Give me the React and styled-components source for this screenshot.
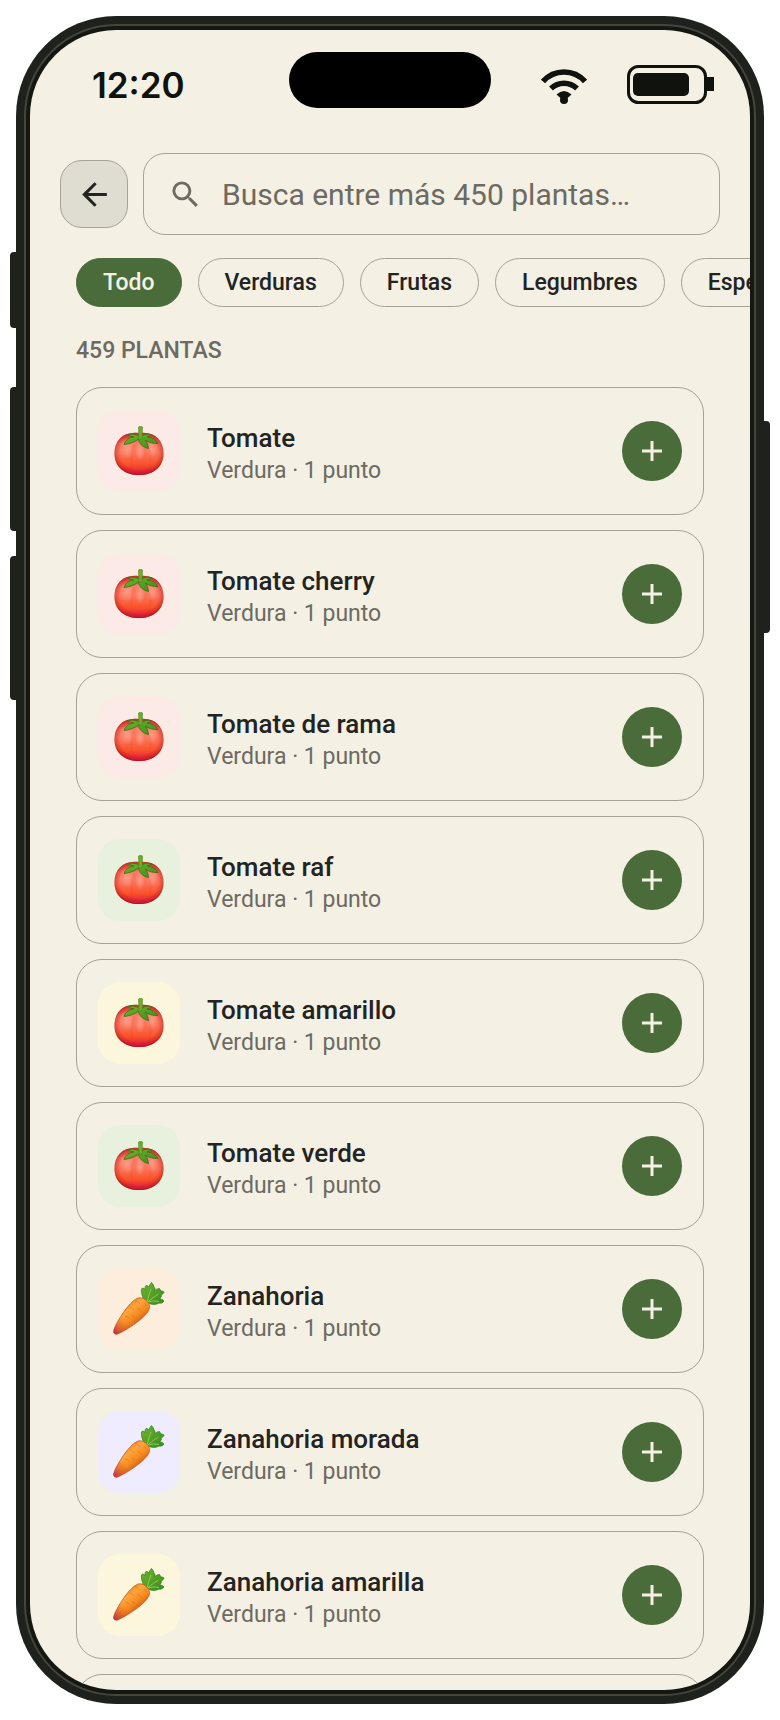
import React, { useState } from 'react';
import styled, { createGlobalStyle } from 'styled-components';

const colors = {
  paper: '#f4f0e4',
  ink: '#23231f',
  muted: '#6c6a61',
  line: '#a5a296',
  green: '#4a6c3a',
  frame: '#1f211c',
  frameLine: '#44463e',
  status: '#10120d',
};

const tints = {
  pink: '#fceae7',
  green: '#e8f1de',
  yellow: '#fcf6dc',
  orange: '#fdeddc',
  purple: '#eeecfe',
};

const GlobalStyle = createGlobalStyle`
  * {
    box-sizing: border-box;
  }

  body {
    margin: 0;
    background: #fff;
    color: ${colors.ink};
    font-family: Roboto, 'Liberation Sans', sans-serif;
  }

  button,
  input {
    font-family: inherit;
  }
`;

const Page = styled.div`
  height: 100vh;
  padding: 16px;
`;

const Phone = styled.div`
  position: relative;
  height: 100%;
  padding: 8px;
  border-radius: 100px;
  background: ${colors.frame};
`;

const SideButton = styled.span`
  position: absolute;
  ${props => props.$side}: -6px;
  top: ${props => props.$top}px;
  width: 6px;
  height: ${props => props.$length}px;
  border-radius: ${props =>
    props.$side === 'left' ? '4px 0 0 4px' : '0 4px 4px 0'};
  background: ${colors.frame};
`;

const Bezel = styled.div`
  height: 100%;
  padding: 4px;
  border: 2px solid ${colors.frameLine};
  border-radius: 92px;
  background: #141712;
`;

const Screen = styled.div`
  height: 100%;
  overflow: hidden;
  border-radius: 86px;
  background: ${colors.paper};
`;

const StatusBar = styled.header`
  display: grid;
  grid-template-columns: 1fr auto 1fr;
  align-items: start;
  padding: 22px 36px 0 62px;
`;

const Clock = styled.time`
  padding-top: 5px;
  font-family: Inter, sans-serif;
  font-size: 35px;
  font-weight: 600;
  line-height: 56px;
  color: ${colors.status};
`;

const Island = styled.div`
  width: 202px;
  height: 56px;
  margin-right: 26px;
  border-radius: 28px;
  background: #000;
`;

const StatusIcons = styled.div`
  display: flex;
  justify-content: flex-end;
  gap: 39px;
  padding-top: 12px;
`;

const SearchRow = styled.div`
  display: flex;
  align-items: center;
  gap: 15px;
  padding: 40px 30px 0;
`;

const BackButton = styled.button`
  display: flex;
  flex: none;
  align-items: center;
  justify-content: center;
  width: 68px;
  height: 68px;
  padding: 0;
  border: 1px solid ${colors.line};
  border-radius: 22px;
  background: #dfdcd1;
  color: ${colors.ink};
`;

const SearchBox = styled.label`
  display: flex;
  flex: 1;
  align-items: center;
  gap: 19px;
  height: 82px;
  padding: 0 24px;
  border: 1px solid ${colors.line};
  border-radius: 22px;
  color: ${colors.muted};
`;

const SearchInput = styled.input`
  flex: 1;
  min-width: 0;
  padding: 0;
  border: 0;
  outline: 0;
  background: transparent;
  color: ${colors.ink};
  font-size: 30px;

  &::placeholder {
    color: ${colors.muted};
    opacity: 1;
  }
`;

const Chips = styled.nav`
  display: flex;
  gap: 16px;
  overflow: hidden;
  padding: 23px 0 0 46px;
`;

const Chip = styled.button`
  flex: none;
  height: 49px;
  padding: 0 26px;
  border: 1px solid ${props => (props.$active ? colors.green : colors.line)};
  border-radius: 25px;
  background: ${props => (props.$active ? colors.green : 'transparent')};
  color: ${props => (props.$active ? colors.paper : colors.ink)};
  font-size: 23px;
  font-weight: 500;
`;

const Count = styled.h2`
  margin: 28px 46px 0;
  color: ${colors.muted};
  font-size: 23px;
  font-weight: 500;
  line-height: 32px;
  text-transform: uppercase;
`;

const List = styled.ul`
  display: flex;
  flex-direction: column;
  gap: 15px;
  margin: 0;
  padding: 20px 46px 0;
  list-style: none;
`;

const Card = styled.li`
  display: flex;
  align-items: center;
  height: 128px;
  padding: 0 21px;
  border: 1px solid ${colors.line};
  border-radius: 26px;
`;

const Thumb = styled.div`
  display: flex;
  flex: none;
  align-items: center;
  justify-content: center;
  width: 82px;
  height: 82px;
  border-radius: 22px;
  background: ${props => tints[props.$tint]};
`;

const Info = styled.div`
  flex: 1;
  min-width: 0;
  padding: 4px 27px 0;
`;

const Name = styled.h3`
  margin: 0;
  font-size: 26px;
  font-weight: 500;
  line-height: 34px;
`;

const Detail = styled.p`
  margin: 0;
  color: ${colors.muted};
  font-size: 23px;
  line-height: 31px;
`;

const AddButton = styled.button`
  display: flex;
  flex: none;
  align-items: center;
  justify-content: center;
  width: 60px;
  height: 60px;
  padding: 0;
  border: 0;
  border-radius: 50%;
  background: ${colors.green};
  color: ${colors.paper};
`;

const WifiIcon = () => (
  <svg width="46" height="40" viewBox="0 -4 46 40" fill="none" aria-hidden="true">
    <g stroke={colors.status} strokeWidth="5.500">
      <path d="M2 13.500a28 28 0 0 1 42 0" />
      <path d="M10 20.500a18.500 18.500 0 0 1 26 0" />
    </g>
    <path d="M15.500 26.500Q23 19.500 30.500 26.500L26 30.500h-6z" fill={colors.status} />
    <circle cx="23" cy="32" r="4" fill={colors.status} />
  </svg>
);

const BatteryIcon = () => (
  <svg width="88" height="40" viewBox="0 0 88 40" fill="none" aria-hidden="true">
    <rect x="2.500" y="2.500" width="77" height="36" rx="10" stroke={colors.status} strokeWidth="3" />
    <rect x="7" y="9" width="56" height="23" rx="5" fill={colors.status} />
    <path d="M81 13h7v14h-7z" fill={colors.status} />
  </svg>
);

const BackIcon = () => (
  <svg width="37" height="37" viewBox="0 0 24 24" aria-hidden="true">
    <path
      d="M20 11H7.830l5.590-5.590L12 4l-8 8 8 8 1.410-1.410L7.830 13H20z"
      fill="currentColor"
    />
  </svg>
);

const SearchIcon = () => (
  <svg width="35" height="35" viewBox="0 0 24 24" aria-hidden="true">
    <path
      d="M15.500 14h-.790l-.280-.270A6.470 6.470 0 0 0 16 9.500 6.500 6.500 0 1 0 9.500 16c1.610 0 3.090-.590 4.230-1.570l.270.280v.790l5 4.990L20.490 19zm-6 0a4.500 4.500 0 1 1 0-9 4.500 4.500 0 0 1 0 9z"
      fill="currentColor"
    />
  </svg>
);

const PlusIcon = () => (
  <svg width="20" height="20" viewBox="0 0 20 20" aria-hidden="true">
    <path d="M10 0v20M0 10h20" stroke="currentColor" strokeWidth="3" />
  </svg>
);

const Gradients = () => (
  <svg width="0" height="0" style={{ position: 'absolute' }} aria-hidden="true">
    <defs>
      <linearGradient id="tomatoSkin" x1="0" y1="0" x2="0" y2="1">
        <stop offset="0" stopColor="#d93b2b" />
        <stop offset="0.250" stopColor="#fb7c66" />
        <stop offset="0.500" stopColor="#fb7257" />
        <stop offset="0.750" stopColor="#fa5229" />
        <stop offset="1" stopColor="#d9104a" />
      </linearGradient>
      <radialGradient id="tomatoEdge" cx="0.500" cy="0.480" r="0.540">
        <stop offset="0.720" stopColor="#b01010" stopOpacity="0" />
        <stop offset="0.900" stopColor="#b81414" stopOpacity="0.400" />
        <stop offset="1" stopColor="#9c0a12" stopOpacity="0.900" />
      </radialGradient>
      <radialGradient id="tomatoShine">
        <stop offset="0" stopColor="#ffb6a2" stopOpacity="0.600" />
        <stop offset="1" stopColor="#ffb6a2" stopOpacity="0" />
      </radialGradient>
      <linearGradient id="carrotSkin" x1="0.200" y1="0.150" x2="0.700" y2="0.800">
        <stop offset="0" stopColor="#e5781b" />
        <stop offset="0.350" stopColor="#fda63d" />
        <stop offset="0.650" stopColor="#f78a1d" />
        <stop offset="1" stopColor="#c04a2c" />
      </linearGradient>
      <linearGradient id="carrotTip" x1="0" y1="1" x2="0.350" y2="0.650">
        <stop offset="0" stopColor="#b42850" />
        <stop offset="1" stopColor="#e06020" stopOpacity="0" />
      </linearGradient>
      <linearGradient id="leaf" x1="0" y1="0" x2="1" y2="1">
        <stop offset="0" stopColor="#6fb52c" />
        <stop offset="1" stopColor="#3a8c20" />
      </linearGradient>
    </defs>
  </svg>
);

const tomatoBody =
  'M25 7C10 5 0.500 13.500 0.500 27.500C0.500 41 10.500 49 25 49C39.500 49 49.500 41 49.500 27.500C49.500 13.500 40 5 25 7Z';

const Tomato = () => (
  <svg width="50" height="50" viewBox="0 0 50 50" aria-hidden="true">
    <path d={tomatoBody} fill="url(#tomatoSkin)" />
    <ellipse cx="13" cy="23" rx="8" ry="10" fill="url(#tomatoShine)" />
    <ellipse cx="26" cy="25" rx="5" ry="10" fill="url(#tomatoShine)" />
    <ellipse cx="38" cy="23" rx="6" ry="9" fill="url(#tomatoShine)" />
    <g fill="none" stroke="#e23c26" strokeOpacity="0.150" strokeWidth="2">
      <path d="M20 18c-3 9-3 20-1 30" />
      <path d="M34 22c4 7 3 17-1 25" />
    </g>
    <path d={tomatoBody} fill="url(#tomatoEdge)" />
    <path
      d="M25.500 10C21 8 17 7.500 13.500 9C16 10 18 10.500 20 11C15 11.500 11.500 14 10 18.500C15 18 20 16.500 24.500 13C25 17.500 29 21.500 34.500 22.500C34 19.500 33.500 16.500 31 14C35 16.500 39.500 18 44 17.500C42 13.500 38 11.500 33 11C34.500 10.500 36 10 37.500 9C34 7.500 31 8 28 10Z"
      fill="url(#leaf)"
      stroke="#3b6f14"
      strokeWidth="0.800"
      strokeLinejoin="round"
    />
    <path d="M24.500 1q2-1.500 4 0l-.5 12h-3z" fill="#6fae2c" stroke="#4a8a1a" strokeWidth="0.600" />
  </svg>
);

const carrotBody =
  'M24 16.500C29 13.500 37.500 20 36.500 26C35 35 12 49 4.500 52C1.500 53 -0.300 50.500 1 47.500C4 39 16 20 24 16.500Z';

const Carrot = () => (
  <svg width="52" height="54" viewBox="0 0 52 54" aria-hidden="true">
    <path
      d="M33 20.500C30 17 28 12 28.500 7c1-1.500 2-1 3.500.500c0-2 0-3 1-4c1.500 0 2 .500 3 1.500c.500-2 1.500-3.500 2.500-4.500c1.500 1.500 2.500 3 2.500 5c1 0 1.500 1 .5 3.500c1.500-1.500 3-2.500 5-2.500l1.500 2.500c2 0 3 .500 3 1.500c-1 1.500-2 2-3 2.500c1 1 0 3-1.500 3.500c2 .500 3.500 1.500 4.500 2.500c-1.500 2-3 2.500-5 2c-2.500 2-8 2-12-.500z"
      fill="url(#leaf)"
      stroke="#26811b"
      strokeWidth="0.700"
      strokeLinejoin="round"
    />
    <path
      d="M34 20q2-8 4-13M34.500 20q6-5 11-8M35 20q6-2 11-.500"
      fill="none"
      stroke="#9bd45a"
      strokeWidth="0.800"
    />
    <path d={carrotBody} fill="url(#carrotSkin)" stroke="#c9601c" strokeWidth="0.800" />
    <path d={carrotBody} fill="url(#carrotTip)" />
    <path
      d="M22 19q3 0 5 3M29 30q-2-3-5-4M17 25q3 1 4 3M22 36q-1-2-4-3M12 34q2 0 4 2M34 24q-2-1-3-3"
      fill="none"
      stroke="#c75a15"
      strokeOpacity="0.400"
      strokeWidth="0.900"
    />
  </svg>
);

const pictures = { tomato: Tomato, carrot: Carrot };

const filters = ['Todo', 'Verduras', 'Frutas', 'Legumbres', 'Especias'];

const plants = [
  { name: 'Tomate', picture: 'tomato', tint: 'pink' },
  { name: 'Tomate cherry', picture: 'tomato', tint: 'pink' },
  { name: 'Tomate de rama', picture: 'tomato', tint: 'pink' },
  { name: 'Tomate raf', picture: 'tomato', tint: 'green' },
  { name: 'Tomate amarillo', picture: 'tomato', tint: 'yellow' },
  { name: 'Tomate verde', picture: 'tomato', tint: 'green' },
  { name: 'Zanahoria', picture: 'carrot', tint: 'orange' },
  { name: 'Zanahoria morada', picture: 'carrot', tint: 'purple' },
  { name: 'Zanahoria amarilla', picture: 'carrot', tint: 'yellow' },
];

const PlantCard = ({ plant }) => {
  const Picture = pictures[plant.picture];

  return (
    <Card>
      <Thumb $tint={plant.tint}>
        <Picture />
      </Thumb>
      <Info>
        <Name>{plant.name}</Name>
        <Detail>Verdura · 1 punto</Detail>
      </Info>
      <AddButton type="button" aria-label={`Añadir ${plant.name}`}>
        <PlusIcon />
      </AddButton>
    </Card>
  );
};

const App = () => {
  const [filter, setFilter] = useState('Todo');
  const [query, setQuery] = useState('');

  return (
    <Page>
      <GlobalStyle />
      <Gradients />
      <Phone>
        <SideButton $side="left" $top={236} $length={76} />
        <SideButton $side="left" $top={371} $length={144} />
        <SideButton $side="left" $top={540} $length={144} />
        <SideButton $side="right" $top={405} $length={212} />
        <Bezel>
          <Screen>
            <StatusBar>
              <Clock>12:20</Clock>
              <Island />
              <StatusIcons>
                <WifiIcon />
                <BatteryIcon />
              </StatusIcons>
            </StatusBar>
            <SearchRow>
              <BackButton type="button" aria-label="Volver">
                <BackIcon />
              </BackButton>
              <SearchBox>
                <SearchIcon />
                <SearchInput
                  type="text"
                  aria-label="Buscar plantas"
                  placeholder="Busca entre más 450 plantas…"
                  value={query}
                  onChange={event => setQuery(event.target.value)}
                />
              </SearchBox>
            </SearchRow>
            <Chips>
              {filters.map(name => (
                <Chip
                  key={name}
                  type="button"
                  $active={name === filter}
                  aria-pressed={name === filter}
                  onClick={() => setFilter(name)}
                >
                  {name}
                </Chip>
              ))}
            </Chips>
            <Count>459 plantas</Count>
            <List>
              {plants.map(plant => (
                <PlantCard key={plant.name} plant={plant} />
              ))}
              <Card aria-hidden="true" />
            </List>
          </Screen>
        </Bezel>
      </Phone>
    </Page>
  );
};

export default App;
